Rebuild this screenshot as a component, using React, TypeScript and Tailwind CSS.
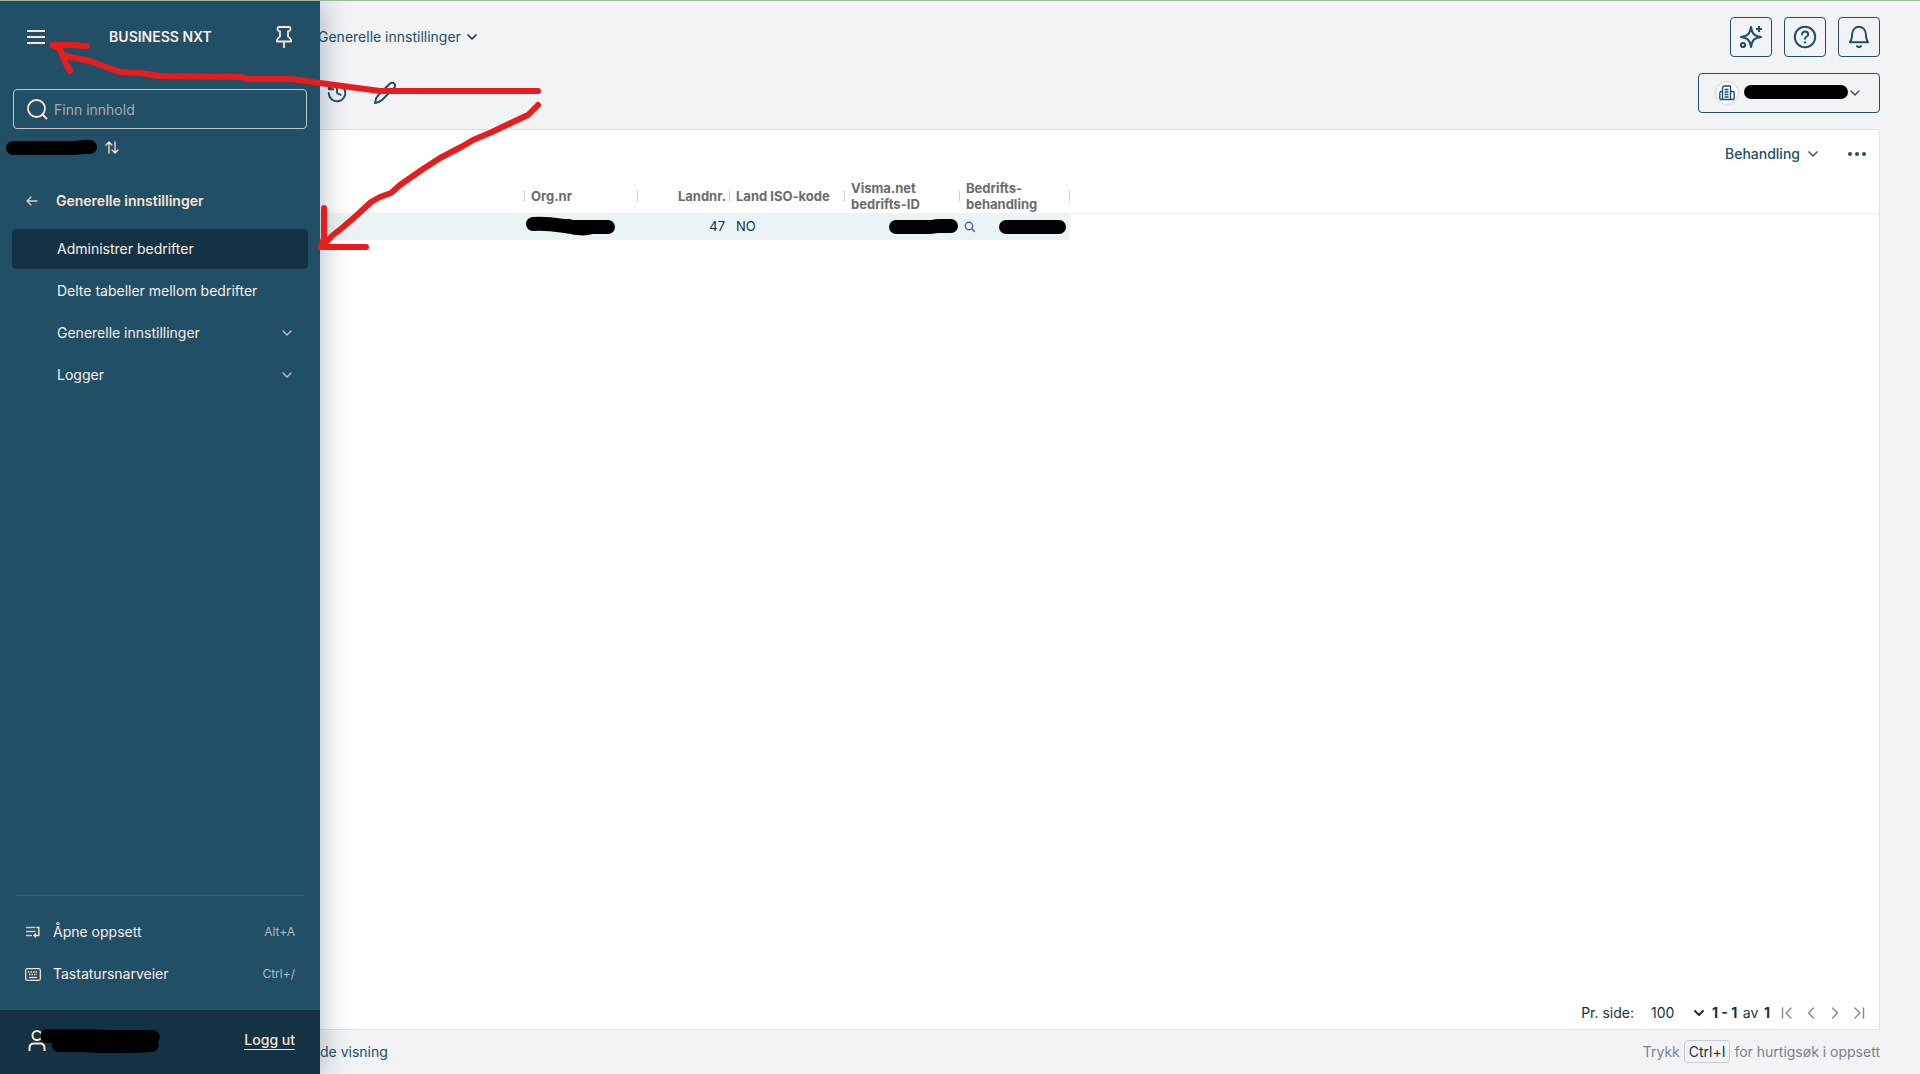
import React from 'react';

const cream = '#fde3d1';

function Scribble({ d, width, className }: { d: string; width: number; className: string }) {
  return (
    <svg aria-hidden="true" className={className} overflow="visible">
      <path d={d} fill="none" stroke="#000" strokeWidth={width} strokeLinecap="round" strokeLinejoin="round" />
    </svg>
  );
}

function Icon({ d, size, className, stroke = 2, box = 24 }: { d: string; size: number; className?: string; stroke?: number; box?: number }) {
  return (
    <svg
      aria-hidden="true"
      width={size}
      height={size}
      viewBox={`0 0 ${box} ${box}`}
      fill="none"
      stroke="currentColor"
      strokeWidth={stroke}
      strokeLinecap="round"
      strokeLinejoin="round"
      className={className}
    >
      <path d={d} />
    </svg>
  );
}

function Chevron({ className, stroke }: { className?: string; stroke: number }) {
  return (
    <svg aria-hidden="true" width="10" height="6" viewBox="0 0 10 6" fill="none" stroke="currentColor" strokeWidth={stroke} strokeLinecap="round" strokeLinejoin="round" className={className}>
      <path d="M1 1 5 5 9 1" />
    </svg>
  );
}

function NavItem({ label, active, expandable }: { label: string; active?: boolean; expandable?: boolean }) {
  return (
    <li>
      <button
        type="button"
        className={
          active
            ? 'flex h-10 w-full items-center justify-between rounded bg-[#133344] pl-[45px] pr-4 text-left'
            : 'flex h-10 w-full items-center justify-between rounded pl-[45px] pr-4 text-left'
        }
      >
        {label}
        {expandable && <Chevron stroke={1.3} className="text-[#c4c4c2]" />}
      </button>
    </li>
  );
}

function Sidebar() {
  return (
    <aside className="z-10 flex w-80 shrink-0 flex-col bg-[#214f66] text-sm text-[#fbeee6] shadow-[0_0_28px_rgba(30,50,70,0.36)]">
      <header className="flex h-[72px] items-center justify-between pl-[27px] pr-7">
        <button type="button" aria-label="Meny" className="text-[#fde3d1]">
          <svg width="18" height="14" viewBox="0 0 18 14" stroke="currentColor" strokeWidth="2"><path d="M0 1h18M0 7h18M0 13h18" /></svg>
        </button>
        <h1 className="font-semibold">BUSINESS NXT</h1>
        <button type="button" aria-label="Fest meny" className="text-[#fde3d1]">
          <svg width="16" height="22" viewBox="0 0 16 22" fill="none" stroke="currentColor" strokeWidth="1.8" strokeLinejoin="round" strokeLinecap="round">
            <path d="M3 1H13C15 1 15 4.500 13 5L12 5.300V10.500C14 11.500 15.200 13 15.200 15.500H.8C.8 13 2 11.500 4 10.500V5.300L3 5C1 4.500 1 1 3 1ZM8 15.500V21.200" />
          </svg>
        </button>
      </header>
      <label className="mx-[13px] mt-4 flex h-10 items-center rounded border border-[#c7c5c3] pl-[13px]">
        <svg aria-hidden="true" width="21" height="21" viewBox="0 0 21 21" fill="none" stroke={cream} strokeWidth="1.8" strokeLinecap="round">
          <circle cx="9.5" cy="9.5" r="8.5" /><path d="m15.500 15.500 4 4" />
        </svg>
        <input aria-label="Finn innhold" placeholder="Finn innhold" className="ml-1.5 w-52 bg-transparent pt-0.5 outline-none placeholder:text-[#a9acab]" />
      </label>
      <div className="flex h-9 items-center pl-1.5">
        <Scribble d="M7 9H66C74 9 80 7 84 8" width={14} className="h-4 w-[91px]" />
        <button type="button" aria-label="Bytt bedrift" className="ml-2">
          <svg width="14" height="13" viewBox="0 0 14 13" fill="none" stroke="#fde3d1" strokeWidth="1.3" strokeLinecap="round" strokeLinejoin="round">
            <path d="M4 12V1M1 4l3-3 3 3M10 1v11M7 9l3 3 3-3" />
          </svg>
        </button>
      </div>
      <nav aria-label="Innstillinger" className="px-3">
        <button type="button" className="mt-4 flex h-10 w-full items-center pl-[14px] font-semibold text-[#fde3d1]">
          <svg aria-hidden="true" width="12" height="10" viewBox="0 0 12 10" fill="none" stroke="#e2d0c4" strokeWidth="1.3" strokeLinecap="round" strokeLinejoin="round"><path d="M11 5H1M5 1 1 5l4 4" /></svg>
          <span className="ml-[18px]">Generelle innstillinger</span>
        </button>
        <ul className="mt-2 flex flex-col gap-0.5">
          <NavItem label="Administrer bedrifter" active />
          <NavItem label="Delte tabeller mellom bedrifter" />
          <NavItem label="Generelle innstillinger" expandable />
          <NavItem label="Logger" expandable />
        </ul>
      </nav>
      <div className="mx-4 mt-auto border-t border-[#2f6a8d] pb-[15px] pt-[15px]">
        <button type="button" className="flex h-[42px] w-full items-center pl-[9px] pr-[9px]">
          <svg aria-hidden="true" width="16" height="12" viewBox="0 0 16 12" fill="none" stroke="#d5cbc4" strokeWidth="1.6"><path d="M1 1.500h9.500M1 5.500h9.500M1 9.500h6" /><path d="M11.500 1.500h2.300v8H8.500M11 7.500 9 9.500l2 2" stroke="#fde3d1" strokeWidth="1.4" /></svg>
          <span className="ml-3">Åpne oppsett</span>
          <kbd className="ml-auto text-xs text-[#b4b9ba]" style={{ fontFamily: 'inherit' }}>Alt+A</kbd>
        </button>
        <button type="button" className="flex h-[42px] w-full items-center pl-[9px] pr-[9px]">
          <svg aria-hidden="true" width="16" height="13" viewBox="0 0 16 13" fill="none" stroke="#fde3d1" strokeWidth="1.3">
            <rect x=".7" y=".7" width="14.600" height="11.600" rx="1.500" />
            <path d="M3 4h10M4 6.500h8" strokeDasharray="1.500 1" /><path d="M4 9.500h8" />
          </svg>
          <span className="ml-3">Tastatursnarveier</span>
          <kbd className="ml-auto text-xs text-[#b4b9ba]" style={{ fontFamily: 'inherit' }}>Ctrl+/</kbd>
        </button>
      </div>
      <footer className="flex h-16 items-center bg-[#133344] pb-1 pl-7 pr-[25px]">
        <svg aria-hidden="true" width="18" height="21" viewBox="0 0 18 21" fill="none" stroke={cream} strokeWidth="2"><circle cx="9" cy="5.5" r="4.5" /><path d="M1.500 21v-3c0-3 2-4.500 4.500-4.500h6c2.500 0 4.500 1.500 4.500 4.500v3" /></svg>
        <svg aria-hidden="true" className="-ml-1.5 mt-0.5 h-6 w-[120px]" viewBox="0 0 120 24" fill="#000"><path d="M7 0H40L70 1H112C119 1 122 8 118 13C120 19 116 23 111 23C85 25 55 24 37 23H20C13 23 11 18 12 14H7C-2 13-2 1 7 0Z" /></svg>
        <a href="#logg-ut" className="ml-auto border-b border-[#fde3d1] font-medium leading-[18px] text-[#fde3d1]">Logg ut</a>
      </footer>
    </aside>
  );
}

const toolButton = 'flex h-10 w-[42px] items-center justify-center rounded border border-[#214f66]';

function TopBar() {
  return (
    <header className="flex h-32 justify-between pr-10 text-[#214f66]">
      <div>
        <button type="button" className="-ml-0.5 mt-4 flex h-10 items-center gap-1.5 text-sm">
          Generelle innstillinger
          <Chevron stroke={1.6} className="text-[#133344]" />
        </button>
        <div className="ml-[6px] mt-[13px] flex h-[46px] items-center gap-[25px]">
          <button type="button" aria-label="Historikk">
            <Icon size={22} stroke={2.1} d="M3 12a9 9 0 1 0 3-6.700L3 8M3 3v5h5M12 7v5l4 2" />
          </button>
          <button type="button" aria-label="Rediger">
            <svg width="24" height="24" viewBox="0 0 24 24" fill="none" stroke="currentColor" strokeWidth="2" strokeLinejoin="round"><path d="M2 22C2.300 19 3 16.500 5 14.500L16.500 3C18 1.500 20 1.300 21.300 2.600C22.700 4 22.300 5.700 21 7L9.500 18.500C7.500 20.500 5 21.600 2 22Z" /></svg>
          </button>
        </div>
      </div>
      <div className="flex flex-col items-end gap-4 pt-4">
        <div className="flex gap-3">
          <button type="button" aria-label="Assistent" className={toolButton}>
            <svg width="24" height="24" viewBox="0 0 24 24" fill="none" stroke="currentColor" strokeWidth="2" strokeLinejoin="round"><path d="M12 2C13.200 9 15 10.800 22 12C15 13.200 13.200 15 12 22C10.800 15 9 13.200 2 12C9 10.800 10.800 9 12 2Z" /><path d="M20 1v6M17 4h6" strokeWidth="2" /><circle cx="4" cy="20" r="2.1" /></svg>
          </button>
          <button type="button" aria-label="Hjelp" className={toolButton}>
            <svg width="24" height="24" viewBox="0 0 24 24" fill="none" stroke="currentColor" strokeWidth="2" strokeLinecap="round"><circle cx="12" cy="12" r="10.2" /><path d="M9 9.500C9 5.500 15.200 5.800 15.200 9.500C15.200 12 12 11.500 12 13.700" /><path d="M12 17.300v.1" strokeWidth="2.2" /></svg>
          </button>
          <button type="button" aria-label="Varsler" className={toolButton}>
            <svg width="24" height="24" viewBox="0 0 24 24" fill="none" stroke="currentColor" strokeWidth="2" strokeLinecap="round" strokeLinejoin="round"><path d="M3 17.200C5 14.500 5 12 5.200 8.500C5.500 4.500 8.500 1.800 12 1.800S18.500 4.500 18.800 8.500C19 12 19 14.500 21 17.200ZM10 21C11 22.600 13 22.600 14 21" /></svg>
          </button>
        </div>
        <button type="button" aria-label="Velg bedrift" className="flex h-10 w-[182px] items-center rounded border border-[#214f66] pl-4">
          <span className="flex size-6 items-center justify-center rounded-full border border-[#cfd3da] bg-white">
            <svg width="16" height="16" viewBox="0 0 16 16" fill="none" stroke="currentColor" strokeWidth="1.4" strokeLinejoin="round"><path d="M3.500 14.500V2.500L5 1H11.500V14.500ZM3.500 6.500H1.500L.8 8V13.500L1.500 14.500H14.500L15.200 13.500V8L14.500 6.500H11.500M5.500 4.500H9.500M5.500 7H9.500M5.500 9.500H9.500M5.500 12H9.500" /></svg>
          </span>
          <span className="mb-0.5 ml-[5px] h-3.5 w-[104px] rounded-full bg-black" />
          <Chevron stroke={1.4} className="ml-0.5" />
        </button>
      </div>
    </header>
  );
}

function Head({ children, right }: { children?: React.ReactNode; right?: boolean }) {
  return (
    <th scope="col" className="h-[35px] p-0 align-middle">
      <div className={right ? 'flex items-center justify-end' : 'flex items-center justify-between'}>
        <span className={right ? 'pr-[3px]' : 'pl-1.5'}>{children}</span>
        <i className="h-2.5 w-px bg-[#cfcfcf]" />
      </div>
    </th>
  );
}

function CompanyTable() {
  return (
    <div className="flex">
      <table className="w-[750px] shrink-0 table-fixed border-collapse text-left">
        <colgroup>
          <col className="w-[205px]" /><col className="w-[113px]" /><col className="w-[92px]" />
          <col className="w-[115px]" /><col className="w-[115px]" /><col className="w-[110px]" />
        </colgroup>
        <thead className="text-[13px] font-semibold leading-4 text-[#6b6b6b]">
          <tr>
            <Head />
            <Head>Org.nr</Head>
            <Head right>Landnr.</Head>
            <Head>Land ISO-kode</Head>
            <Head>Visma.net<br />bedrifts-ID</Head>
            <Head>Bedrifts-<br />behandling</Head>
          </tr>
        </thead>
        <tbody className="bg-[#ebf4f4] text-[13px] text-[#133344]">
          <tr className="h-[27px]">
            <td />
            <td className="p-0"><Scribble d="M8 7C28 6 35 9 48 10H66C62 12 50 12 44 9M66 10H83" width={14} className="h-5 w-24" /></td>
            <td className="p-0 pr-[5px] text-right">47</td>
            <td className="p-0 pl-1.5">NO</td>
            <td className="p-0"><Scribble d="M7 8H40C46 8 44 7 50 7H62" width={14} className="ml-[44px] h-4 w-[70px]" /></td>
            <td className="p-0">
              <div className="flex items-center pl-1">
                <button type="button" aria-label="Slå opp" className="text-[#3f5f92]"><Icon size={12} stroke={2.6} d="M10 2.500a7.500 7.500 0 1 0 0 15a7.500 7.500 0 1 0 0-15M16 16l5 5" /></button>
                <span className="ml-[23px] h-3.5 w-[67px] rounded-full bg-black" />
              </div>
            </td>
          </tr>
        </tbody>
      </table>
      <div className="h-9 grow border-b border-[#ebedef]" />
    </div>
  );
}

function Pager() {
  const btn = 'flex w-6 justify-center text-[#868686]';
  return (
    <div className="mt-auto flex h-8 items-center justify-end pr-2 text-sm text-[#133344]">
      <label htmlFor="page-size">Pr. side:</label>
      <div className="relative ml-[17px] flex items-center">
        <select id="page-size" defaultValue="100" className="w-[57px] appearance-none bg-transparent">
          <option>100</option>
        </select>
        <Chevron stroke={2} className="pointer-events-none absolute right-1" />
      </div>
      <p className="ml-1 mr-[5px] flex w-[58px] justify-between"><b className="font-bold">1 - 1</b> av <b className="font-bold">1</b></p>
      <button type="button" aria-label="Første side" className={btn}><Icon size={12} box={12} stroke={1.4} d="M1.500 1v10M10 1 5 6l5 5" /></button>
      <button type="button" aria-label="Forrige side" className={btn}><Icon size={12} box={12} stroke={1.4} d="M8.500 1l-5 5 5 5" /></button>
      <button type="button" aria-label="Neste side" className={btn}><Icon size={12} box={12} stroke={1.4} d="M3.500 1l5 5-5 5" /></button>
      <button type="button" aria-label="Siste side" className={btn}><Icon size={12} box={12} stroke={1.4} d="M2 1l5 5-5 5M10.500 1v10" /></button>
    </div>
  );
}

function ArrowMarkup() {
  return (
    <svg aria-hidden="true" className="pointer-events-none absolute left-0 top-0 z-20 h-72 w-[560px]" fill="none" stroke="#e81c1c" strokeWidth="6" strokeLinecap="round" strokeLinejoin="round">
      <path d="M538 90H380L320 82L292 78H250L240 76L160 75L140 72L120 71L90 60L66 55M87 45L72 44L52 44L60 48L65 61L70 70" />
      <path d="M538 104L528 114L513 121L492 131L473 139L463 145L440 157L423 168L410 177L400 184L391 192L380 196L371 201L357 214L342 227L333 234L321 246M324 207V237L321 246H366" />
    </svg>
  );
}

export default function App() {
  return (
    <div className="relative flex h-screen overflow-hidden border-t border-[#9fb59c] bg-[#f1f3f5] font-['Inter',sans-serif]">
      <Sidebar />
      <main className="flex min-w-0 flex-1 flex-col">
        <TopBar />
        <section className="mr-10 flex min-h-0 grow flex-col rounded-r border border-l-0 border-[#dfe1e6] bg-white">
          <div className="flex h-12 shrink-0 items-center justify-end gap-[30px] pr-[13px] text-sm font-medium text-[#214f66]">
            <button type="button" className="flex items-center gap-2">
              Behandling
              <Chevron stroke={1.7} className="text-[#3f5f8a]" />
            </button>
            <button type="button" aria-label="Flere valg">
              <svg width="18" height="4" viewBox="0 0 18 4" fill="currentColor"><circle cx="2" cy="2" r="2" /><circle cx="9" cy="2" r="2" /><circle cx="16" cy="2" r="2" /></svg>
            </button>
          </div>
          <CompanyTable />
          <Pager />
        </section>
        <footer className="flex h-11 items-center justify-between pr-10 text-sm">
          <span className="text-[#214f66]">de visning</span>
          <p className="text-[#7c8089]">
            Trykk <kbd className="rounded border border-[#c9ccd4] px-1 py-0.5 text-[#133344]" style={{ fontFamily: 'inherit' }}>Ctrl+I</kbd> for hurtigsøk i oppsett
          </p>
        </footer>
      </main>
      <ArrowMarkup />
    </div>
  );
}
